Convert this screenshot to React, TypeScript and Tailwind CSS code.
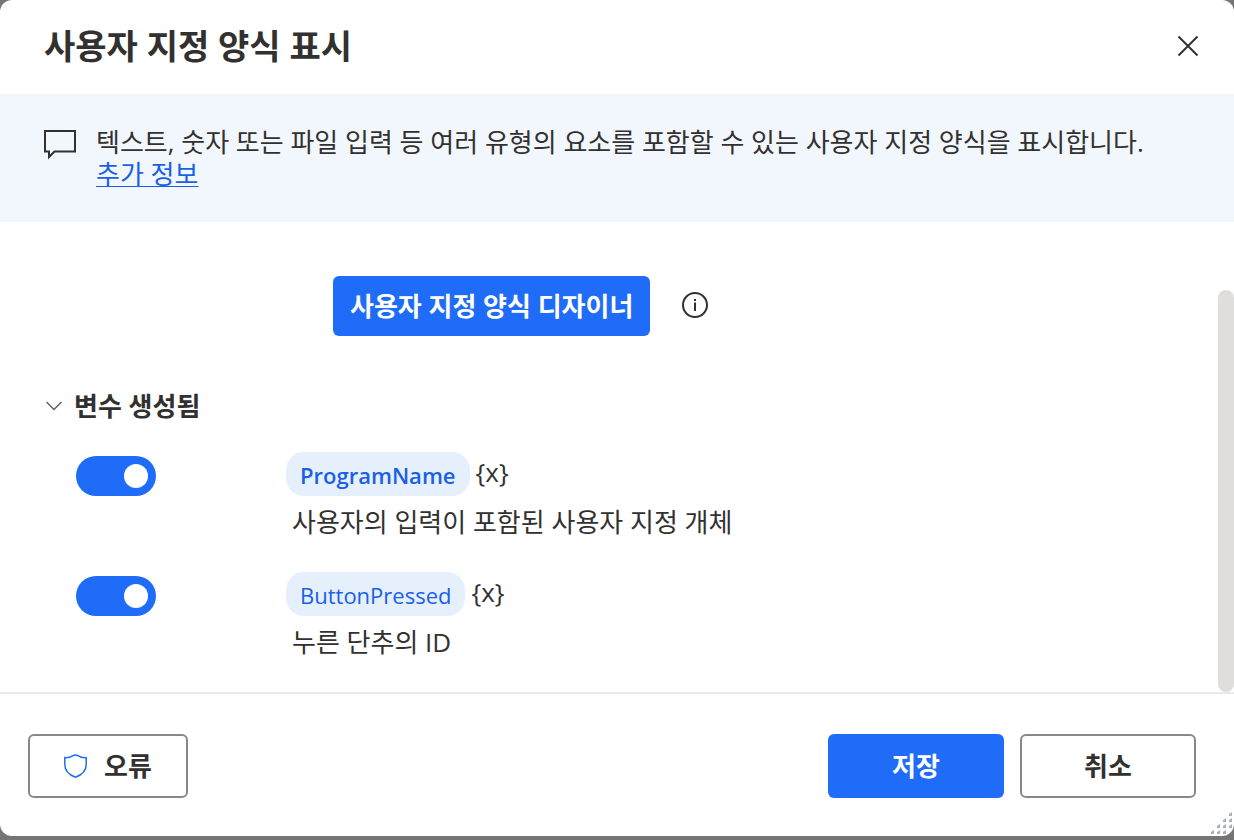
import React, { useState } from 'react';

interface Variable {
  id: string;
  name: string;
  description: string;
  highlighted: boolean;
}

const VARIABLES: Variable[] = [
  { id: 'program-name', name: 'ProgramName', description: '사용자의 입력이 포함된 사용자 지정 개체', highlighted: true },
  { id: 'button-pressed', name: 'ButtonPressed', description: '누른 단추의 ID', highlighted: false },
];

// Resize grip dots, one row per line: [x, y]
const GRIP_DOTS = [
  [19, 0],
  [13, 6], [19, 6],
  [7, 12], [13, 12], [19, 12],
  [1, 18], [7, 18], [13, 18],
];

const VariableRow: React.FC<{ variable: Variable }> = ({ variable }) => {
  const [enabled, setEnabled] = useState(true);

  return (
    <li className="flex h-[120px] items-start pl-[76px]">
      <input
        type="checkbox"
        role="switch"
        aria-label={variable.name}
        checked={enabled}
        onChange={(e) => setEnabled(e.target.checked)}
        className="mt-1 flex h-10 w-20 shrink-0 appearance-none items-center rounded-full bg-gray-400 px-2 before:h-6 before:w-6 before:rounded-full before:bg-white checked:justify-end checked:bg-[#1f6cf9]"
      />
      <div className="ml-[130px]">
        <div className="flex items-start gap-1.5">
          <button
            type="button"
            className={`h-11 rounded-[18px] bg-[#e6f0fd] px-[14px] pt-0.5 text-[22px] text-[#1a5fe6] ${
              variable.highlighted ? 'font-semibold' : ''
            }`}
          >
            {variable.name}
          </button>
          <button type="button" className="h-10 text-[26px] leading-10">{'{x}'}</button>
        </div>
        <p className="mt-2 pl-1.5 text-[26px] leading-9">{variable.description}</p>
      </div>
    </li>
  );
};

const App: React.FC = () => {
  const [expanded, setExpanded] = useState(true);

  return (
    <div className="flex min-h-screen flex-col bg-[#757575] pb-1 font-['Open_Sans','Noto_Sans_CJK_KR',sans-serif] text-[#323130]">
      <div role="dialog" aria-labelledby="dialog-title" className="relative flex flex-1 flex-col overflow-hidden rounded-xl bg-white">
        <header className="flex h-[94px] items-center justify-between pr-8 pb-0.5 pl-11">
          <h1 id="dialog-title" className="text-[34px] leading-none font-bold">사용자 지정 양식 표시</h1>
          <button type="button" aria-label="닫기" className="p-0.5">
            <svg width="24" height="24" viewBox="0 0 24 24" fill="none" stroke="currentColor" strokeWidth="2">
              <path d="M2.5 2.5l19 19M21.5 2.5l-19 19" />
            </svg>
          </button>
        </header>

        <section className="flex h-32 items-start gap-5 bg-[#f2f7fe] px-11 pt-8">
          <svg className="mt-1 shrink-0" width="32" height="30" viewBox="0 0 32 30" fill="none" stroke="currentColor" strokeWidth="2">
            <path d="M1 1h30v20.500H10.500L5 27v-5.500H1z" />
          </svg>
          <p className="text-[26px] leading-8">
            텍스트, 숫자 또는 파일 입력 등 여러 유형의 요소를 포함할 수 있는 사용자 지정 양식을 표시합니다.{' '}
            <a href="#more" className="block w-fit text-[#1a5fe6] underline decoration-1 underline-offset-2">추가 정보</a>
          </p>
        </section>

        <div className="flex flex-1">
          <main className="flex-1">
            <div className="flex items-center gap-8 pt-[54px] pl-[333px]">
              <button type="button" className="h-[60px] rounded-md bg-[#1f6cf9] px-[17px] text-[26px] font-bold text-white">
                사용자 지정 양식 디자이너
              </button>
              <button type="button" aria-label="정보" className="pb-0.5">
                <svg width="26" height="26" viewBox="0 0 26 26" fill="none" stroke="currentColor" strokeWidth="2">
                  <circle cx="13" cy="13" r="12" />
                  <path d="M13 10.500V19M13 7v2" />
                </svg>
              </button>
            </div>

            <button
              type="button"
              aria-expanded={expanded}
              onClick={() => setExpanded(!expanded)}
              className="mt-[50px] ml-[46px] flex h-10 items-center gap-3 text-[26px] font-bold"
            >
              <svg width="16" height="10" viewBox="0 0 16 10" fill="none" stroke="#605e5c" strokeWidth="1.500">
                <path d="M.5 1L8 8.500 15.500 1" />
              </svg>
              변수 생성됨
            </button>

            {expanded && (
              <ul className="mt-[26px]">
                {VARIABLES.map((variable) => (
                  <VariableRow key={variable.id} variable={variable} />
                ))}
              </ul>
            )}
          </main>

          {/* Scrollbar */}
          <div className="flex w-4 flex-col pt-[68px]">
            <div className="flex-1 rounded-full bg-[#dfdedd]" />
          </div>
        </div>

        <footer className="flex items-center gap-4 border-t-2 border-[#eaeaea] pt-10 pr-[38px] pb-[38px] pl-7 text-[26px] font-bold">
          <button type="button" className="mr-auto flex h-16 w-40 items-center justify-center gap-4 rounded-md border-2 border-[#8a8886]">
            <svg width="24" height="24" viewBox="0 0 24 24" fill="none" stroke="#1f6cf9" strokeWidth="1.500">
              <path d="M.8 3.600C4 3.800 7 3 9 1.600Q11.500 .2 14 1.600C16 3 19 3.800 22.200 3.600V10.500C22.200 16.500 17.500 21 11.500 23.200C5.500 21 .8 16.500 .8 10.500z" />
            </svg>
            오류
          </button>
          <button type="button" className="h-16 w-44 rounded-md bg-[#1f6cf9] text-white">저장</button>
          <button type="button" className="h-16 w-44 rounded-md border-2 border-[#8a8886]">취소</button>
        </footer>

        <svg className="absolute right-0 bottom-0" width="24" height="24" viewBox="0 0 24 24" fill="#a9afc0">
          {GRIP_DOTS.map(([x, y]) => (
            <path key={`${x}-${y}`} d={`M${x + 3} ${y}v4h-3v-2z`} />
          ))}
        </svg>
      </div>
    </div>
  );
};

export default App;
